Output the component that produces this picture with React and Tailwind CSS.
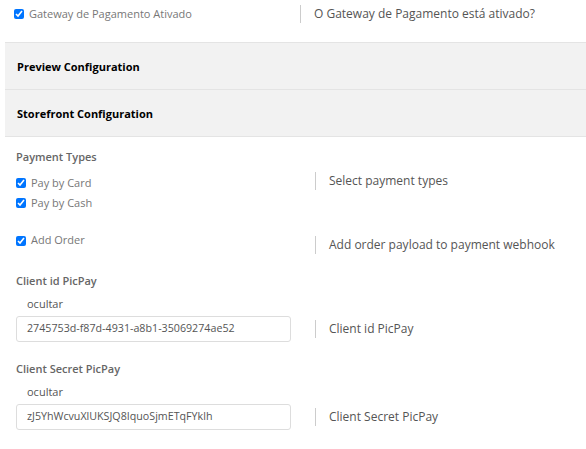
import React from 'react'

const font = { fontFamily: '"Open Sans", "Noto Sans", sans-serif' }

function Check({ label }) {
  return (
    <label className="flex items-center gap-[5px] text-[11px] text-[#777]">
      <input type="checkbox" defaultChecked className="w-[10px] h-[10px] m-0 accent-[#0075ff]" />
      {label}
    </label>
  )
}

function Hint({ children }) {
  return (
    <div className="flex items-center whitespace-nowrap">
      <div className="w-px h-[18px] bg-[#ccc] mr-[13px]" />
      <span className="text-[12px] text-[#555]">{children}</span>
    </div>
  )
}

function SecretField({ label, value }) {
  return (
    <div className="px-[16px]">
      <div className="text-[11px] font-semibold text-[#666] pt-[19px]">{label}</div>
      <div className="text-[11px] text-[#555] pl-[11px] pt-[7px]">ocultar</div>
      <div className="flex items-center mt-[3px]">
        <div className="w-[275px] h-[26px] border border-[#ddd] rounded-[3px] flex items-center px-[10px] text-[10.7px] text-[#555]">
          {value}
        </div>
        <div className="ml-[24px]">
          <Hint>{label}</Hint>
        </div>
      </div>
    </div>
  )
}

export default function App() {
  return (
    <div className="w-[586px] h-[449px] bg-white overflow-hidden" style={font}>
      <div className="flex items-center h-[28px]">
        <div className="w-[300px] pl-[14px]">
          <Check label="Gateway de Pagamento Ativado" />
        </div>
        <Hint>O Gateway de Pagamento está ativado?</Hint>
      </div>

      <div className="ml-[5px] mt-[14px] bg-[#f2f2f2] border-t border-[#e4e4e4]">
        <div className="h-[47px] flex items-center pl-[12px] pt-[2px] text-[11px] font-bold text-black border-b border-[#e4e4e4]">
          Preview Configuration
        </div>
        <div className="h-[47px] flex items-center pl-[12px] pt-[2px] text-[11px] font-bold text-black border-b border-[#e4e4e4]">
          Storefront Configuration
        </div>
      </div>

      <div className="px-[16px] pt-[12px]">
        <div className="text-[11px] font-semibold text-[#666]">Payment Types</div>
        <div className="flex items-start mt-[9px]">
          <div className="w-[299px] flex flex-col gap-[4px]">
            <Check label="Pay by Card" />
            <Check label="Pay by Cash" />
          </div>
          <div className="-mt-[3px]">
            <Hint>Select payment types</Hint>
          </div>
        </div>
        <div className="flex items-center mt-[16px]">
          <div className="w-[299px]">
            <Check label="Add Order" />
          </div>
          <div className="pt-[8px]">
            <Hint>Add order payload to payment webhook</Hint>
          </div>
        </div>
      </div>

      <SecretField label="Client id PicPay" value="2745753d-f87d-4931-a8b1-35069274ae52" />
      <SecretField label="Client Secret PicPay" value="zJ5YhWcvuXlUKSJQ8IquoSjmETqFYklh" />
    </div>
  )
}
